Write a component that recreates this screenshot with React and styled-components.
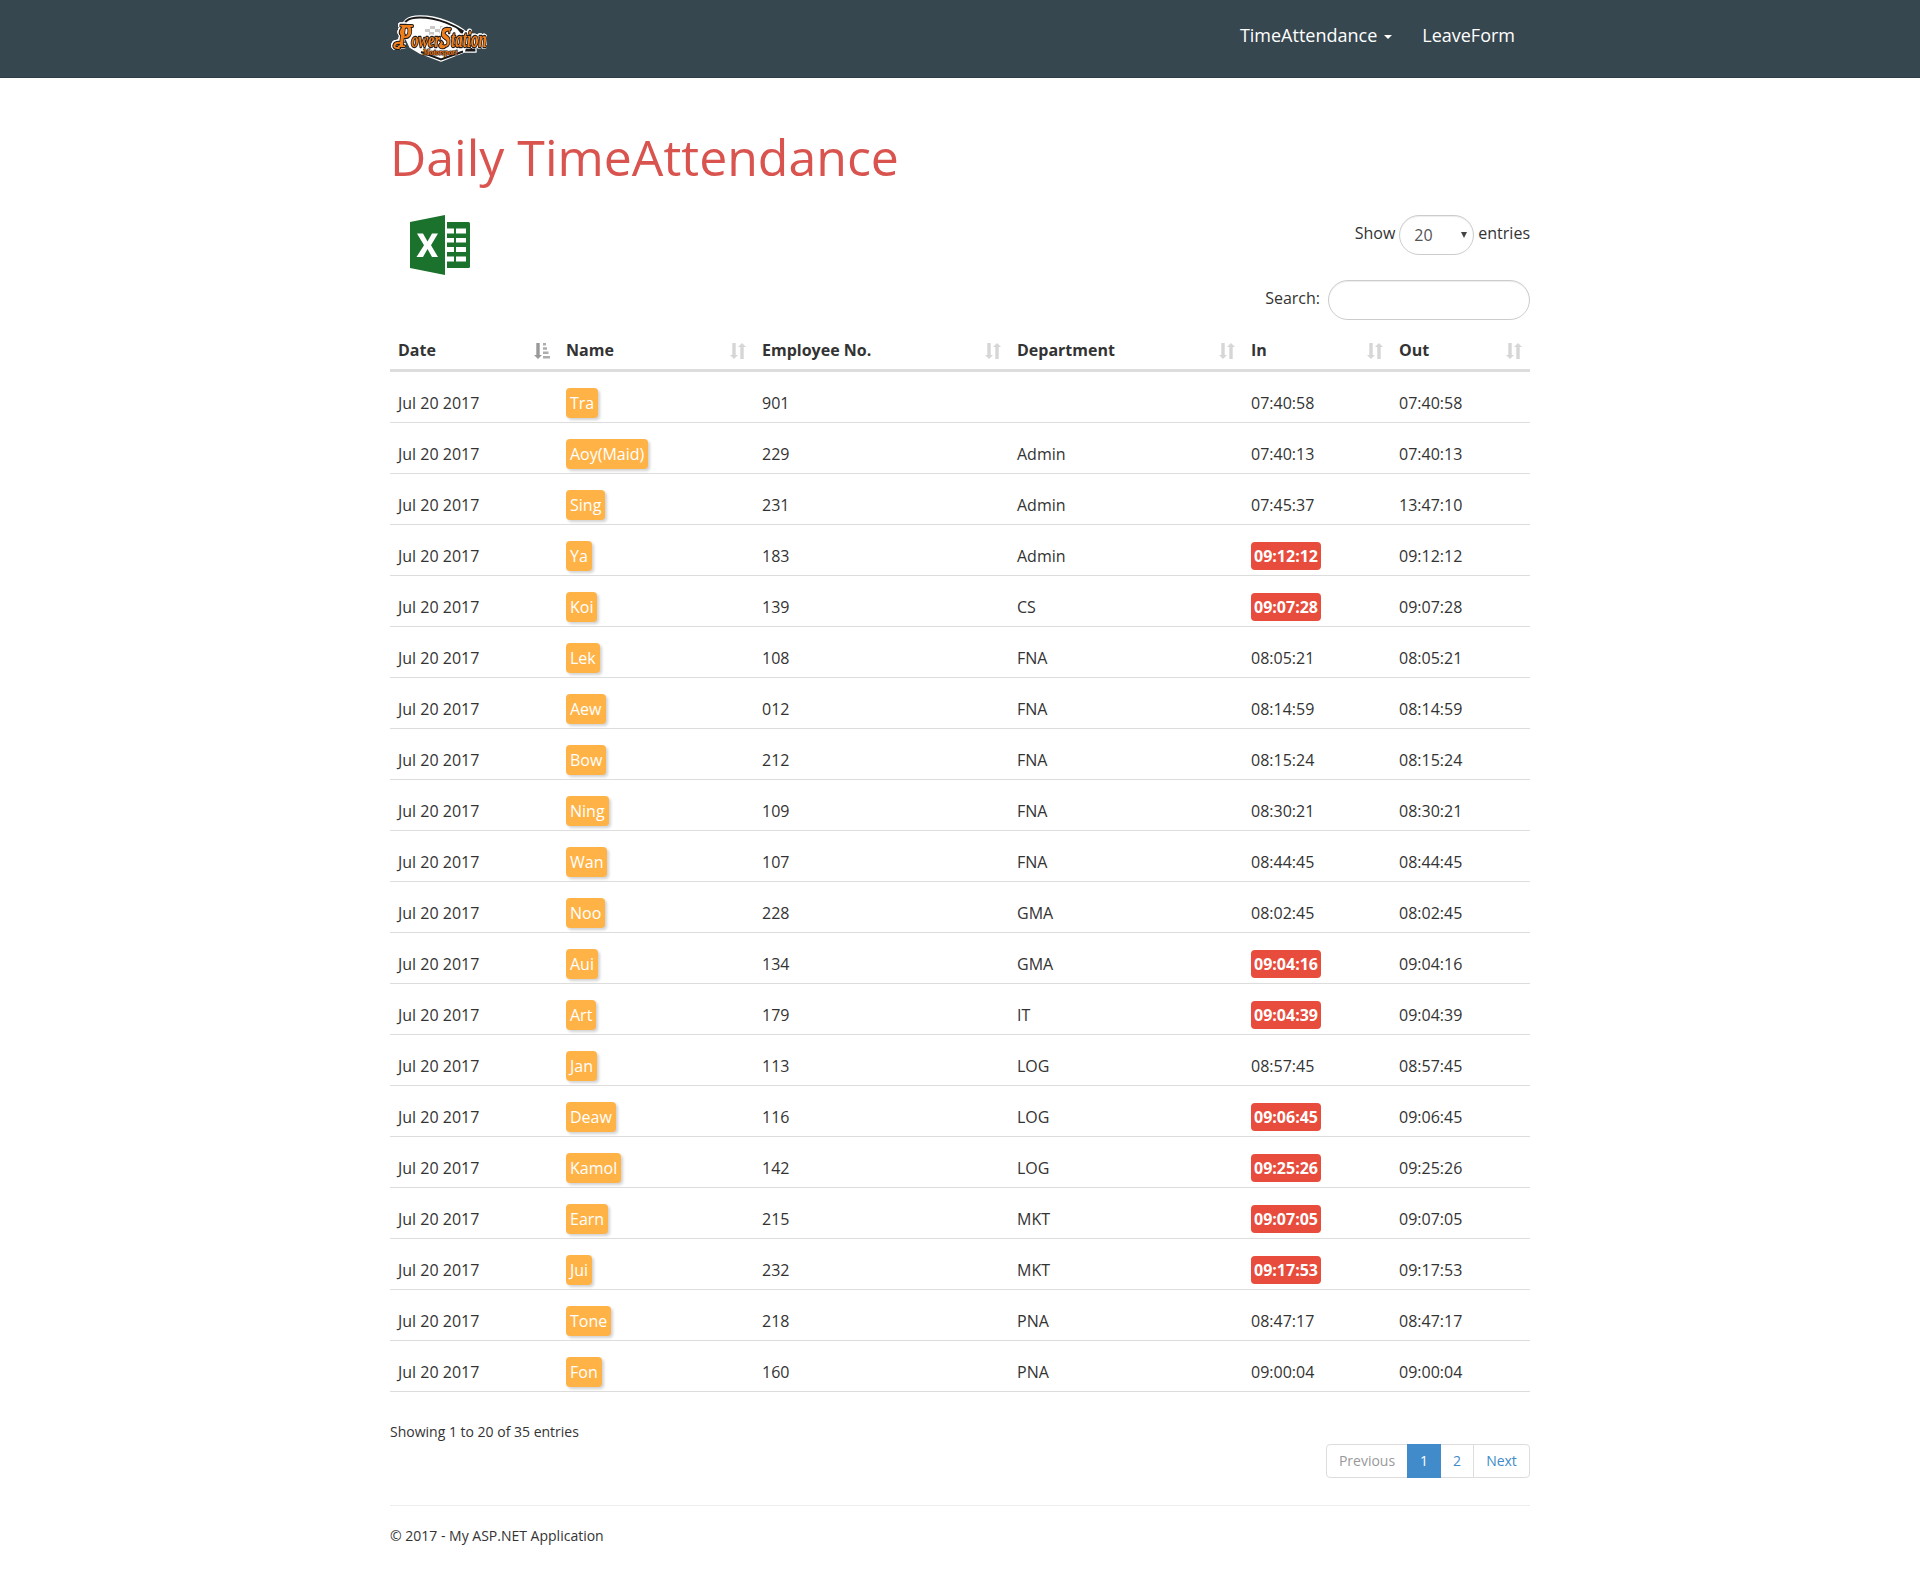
import React from "react";
import styled, { createGlobalStyle, css } from "styled-components";

const GlobalStyle = createGlobalStyle`
  *, *::before, *::after { box-sizing: border-box; }
  body {
    margin: 0;
    background: #fff;
    color: #333;
    font: 14px/20px "Open Sans", "Noto Sans", sans-serif;
  }
`;

const NavBar = styled.nav`
  height: 78px;
  background: #37474f;
  border-bottom: 1px solid #2c3e46;
`;

const Container = styled.div`
  width: 1140px;
  margin: 0 auto;
`;

const NavInner = styled(Container)`
  display: flex;
  justify-content: space-between;
  align-items: flex-start;
`;

const Brand = styled.a`
  display: block;
  height: 77px;
  svg { display: block; overflow: visible; }
`;

const Menu = styled.ul`
  display: flex;
  list-style: none;
  margin: 0;
  padding: 0;
`;

const MenuItem = styled.li`
  display: flex;
  align-items: center;
  gap: 7px;
  padding: 22px 15px;
  line-height: 26px;
  font-size: 18px;
  color: #fff;
`;

const Caret = styled.span`
  margin-top: 4px;
  border-top: 4px solid #fff;
  border-left: 4px solid transparent;
  border-right: 4px solid transparent;
`;

const Title = styled.h1`
  margin: 0;
  padding-top: 43px;
  font-size: 50px;
  font-weight: 400;
  line-height: 72px;
  color: #d9534f;
`;

const Toolbar = styled.div`
  display: flex;
  justify-content: space-between;
  align-items: flex-start;
  padding: 22px 0 0 20px;
  height: 134px;
`;

const Controls = styled.div`
  display: flex;
  flex-direction: column;
  align-items: flex-end;
  gap: 25px;
  font-size: 16px;
`;

const Field = styled.label`
  display: flex;
  align-items: center;
  gap: ${(p) => p.$gap}px;
  height: 40px;
`;

const FieldText = styled.span`
  line-height: 36px;
  padding-bottom: 4px;
`;

const pill = css`
  height: 40px;
  border: 1px solid #ccc;
  border-radius: 20px;
  box-shadow: inset 0 1px 1px rgba(0, 0, 0, 0.075);
  background: #fff;
`;

const LengthSelect = styled.span`
  ${pill}
  width: 75px;
  display: flex;
  align-items: center;
  justify-content: space-between;
  padding: 0 6px 0 14px;
  color: #555;
`;

const SelectArrow = styled.span`
  border-top: 6px solid #444;
  border-left: 3px solid transparent;
  border-right: 3px solid transparent;
`;

const SearchInput = styled.input`
  ${pill}
  width: 202px;
  padding: 6px 12px;
  outline: none;
`;

const Table = styled.table`
  width: 1140px;
  table-layout: fixed;
  border-collapse: separate;
  border-spacing: 0;
  font-size: 16px;
`;

const Th = styled.th`
  width: ${(p) => p.$width}px;
  height: 45px;
  padding: 4px 8px 0;
  border-bottom: 3px solid #ddd;
  text-align: left;
  font-weight: 700;
`;

const ThInner = styled.div`
  display: flex;
  justify-content: space-between;
  align-items: center;
  height: 38px;
  line-height: 38px;
  svg { margin-top: 2px; }
`;

const Td = styled.td`
  height: 51px;
  padding: 16px 8px 4px;
  border-bottom: 1px solid #ddd;
  line-height: 30px;
  vertical-align: top;
`;

const NameChip = styled.span`
  display: block;
  width: fit-content;
  height: 30px;
  padding: 0 4px;
  border-radius: 4px;
  background: #ffb347;
  color: #fff;
  box-shadow: 2px 2px 3px rgba(0, 0, 0, 0.18);
`;

const LateChip = styled.span`
  display: block;
  width: 70px;
  height: 28px;
  margin-top: 1px;
  border-radius: 4px;
  background: #e74c3c;
  color: #fff;
  font-weight: 700;
  line-height: 28px;
  text-align: center;
`;

const Info = styled.div`
  padding-top: 30px;
  line-height: 20px;
`;

const Pager = styled.div`
  display: flex;
  justify-content: flex-end;
  margin-top: 2px;
`;

const Page = styled.a`
  height: 34px;
  width: ${(p) => p.$width}px;
  margin-left: -1px;
  border: 1px solid ${(p) => (p.$active ? "#428bca" : "#ddd")};
  background: ${(p) => (p.$active ? "#428bca" : "#fff")};
  color: ${(p) => (p.$active ? "#fff" : p.$disabled ? "#999" : "#428bca")};
  line-height: 32px;
  text-align: center;
  z-index: ${(p) => (p.$active ? 1 : 0)};
  &:first-child { border-radius: 4px 0 0 4px; }
  &:last-child { border-radius: 0 4px 4px 0; }
`;

const Footer = styled.footer`
  margin-top: 27px;
  padding-top: 20px;
  border-top: 1px solid #eee;
  height: 71px;
`;

const Lettering = styled.g`
  font-family: "Liberation Serif", serif;
  font-style: italic;
  font-weight: 700;
  fill: #f07f1c;
  stroke: #201a18;
  stroke-width: 2.4px;
  stroke-linejoin: round;
  paint-order: stroke;
  filter: drop-shadow(0.6px 0 0 #fff) drop-shadow(-0.6px 0 0 #fff)
    drop-shadow(0 0.6px 0 #fff) drop-shadow(0 -0.6px 0 #fff);
`;

const Swash = styled.path`
  fill: none;
  stroke: ${(p) => (p.$outline ? "#201a18" : "#f07f1c")};
  stroke-width: ${(p) => (p.$outline ? 4 : 2)}px;
  stroke-linecap: round;
`;

const swashes = "M22 26 C10 25 8 36 14 35 M11 43 C3 42 2 49 9 48 M60 29 C53 30 50 36 56 38 M52 43 C48 46 51 48 54 47";

const Logo = () => (
  <svg width="102" height="70" viewBox="0 0 102 70">
    <path d="M13 32 C11 21 17 16 30 16 C50 16 68 25 76 32 L85 35 L86 52 L74 52 L51 61 L30 53 L20 47 Z" fill="#fff" stroke="#fff" strokeWidth="1.500" strokeLinejoin="round" />
    <path d="M14 32 C12 22 17 17.500 30 17.500 C48 17.500 66 26 76 33 M31 52 L51 59.500 L73 51.500" fill="none" stroke="#181818" strokeWidth="2" />
    <path d="M66 27.500 L76 33 L84 35 L85.500 51.500 L75 51.500 L78 42 Z" fill="#181818" />
    <path d="M40 26h5v3h-5zM50 26h5v3h-5zM35 29h5v3h-5zM45 29h5v3h-5zM39 32h5v3h-5zM49 32h4v3h-4z" fill="#c9c9c9" />
    <Lettering>
      <Swash $outline d={swashes} />
      <text x="8" y="47" textLength="89" lengthAdjust="spacingAndGlyphs">
        <tspan fontSize="33">P</tspan>
        <tspan fontSize="22">ower</tspan>
        <tspan fontSize="30">S</tspan>
        <tspan fontSize="23">tation</tspan>
      </text>
      <Swash d={swashes} />
    </Lettering>
    <text x="33" y="55" fontFamily="Liberation Serif, serif" fontStyle="italic" fontWeight="700" fontSize="8" textLength="34" lengthAdjust="spacingAndGlyphs" fill="#f07f1c" stroke="#201a18" strokeWidth="1.200" paintOrder="stroke">Motorsport</text>
  </svg>
);

const ExcelIcon = () => (
  <svg width="60" height="60" viewBox="0 0 60 60">
    <path d="M0 7 L35 0 V60 L0 53 Z" fill="#1b722d" />
    <path d="M37 7H58.5Q60 7 60 8.500V51.500Q60 53 58.500 53H37Z" fill="#1b722d" />
    <path d="M37 13.500h7v5h-7zM46 13.500h10v5H46zM37 23h7v4.500h-7zM46 23h10v4.500H46zM37 32h7v5h-7zM46 32h10v5H46zM37 41.500h7v5h-7zM46 41.500h10v5H46z" fill="#fff" />
    <path d="M7 18.500h6l4.500 8 4.500-8h6l-7 11.800 7 11.700h-6l-4.500-8-4.500 8H6.500l7.500-11.700z" fill="#fff" />
  </svg>
);

const SortIcon = () => (
  <svg width="16" height="16" viewBox="0 0 16 16" fill="#d6d6d6">
    <path d="M2.300 0h3.400v12H8L4 16 0 12h2.300zM10.300 16h3.400V4H16L12 0 8 4h2.300z" />
  </svg>
);

const SortAscIcon = () => (
  <svg width="16" height="16" viewBox="0 0 16 16">
    <path d="M2.300 0h3.400v12H8L4 16 0 12h2.300z" fill="#999" />
    <path d="M9 0h3v2.500H9zM9 4.300h4v2.500H9zM9 8.600h5.500v2.500H9zM9 13h7v2.500H9z" fill="#adadad" />
  </svg>
);

const columns = [
  ["Date", 168],
  ["Name", 196],
  ["Employee No.", 255],
  ["Department", 234],
  ["In", 148],
  ["Out", 139],
];

const rows = [
  ["Tra", "901", "", "07:40:58", "07:40:58"],
  ["Aoy(Maid)", "229", "Admin", "07:40:13", "07:40:13"],
  ["Sing", "231", "Admin", "07:45:37", "13:47:10"],
  ["Ya", "183", "Admin", "09:12:12", "09:12:12", true],
  ["Koi", "139", "CS", "09:07:28", "09:07:28", true],
  ["Lek", "108", "FNA", "08:05:21", "08:05:21"],
  ["Aew", "012", "FNA", "08:14:59", "08:14:59"],
  ["Bow", "212", "FNA", "08:15:24", "08:15:24"],
  ["Ning", "109", "FNA", "08:30:21", "08:30:21"],
  ["Wan", "107", "FNA", "08:44:45", "08:44:45"],
  ["Noo", "228", "GMA", "08:02:45", "08:02:45"],
  ["Aui", "134", "GMA", "09:04:16", "09:04:16", true],
  ["Art", "179", "IT", "09:04:39", "09:04:39", true],
  ["Jan", "113", "LOG", "08:57:45", "08:57:45"],
  ["Deaw", "116", "LOG", "09:06:45", "09:06:45", true],
  ["Kamol", "142", "LOG", "09:25:26", "09:25:26", true],
  ["Earn", "215", "MKT", "09:07:05", "09:07:05", true],
  ["Jui", "232", "MKT", "09:17:53", "09:17:53", true],
  ["Tone", "218", "PNA", "08:47:17", "08:47:17"],
  ["Fon", "160", "PNA", "09:00:04", "09:00:04"],
];

export default function App() {
  return (
    <>
      <GlobalStyle />
      <NavBar>
        <NavInner>
          <Brand><Logo /></Brand>
          <Menu>
            <MenuItem>TimeAttendance <Caret /></MenuItem>
            <MenuItem>LeaveForm</MenuItem>
          </Menu>
        </NavInner>
      </NavBar>
      <Container>
        <Title>Daily TimeAttendance</Title>
        <Toolbar>
          <ExcelIcon />
          <Controls>
            <Field $gap={4}>
              <FieldText>Show</FieldText>
              <LengthSelect>20<SelectArrow /></LengthSelect>
              <FieldText>entries</FieldText>
            </Field>
            <Field $gap={8}>
              <FieldText>Search:</FieldText>
              <SearchInput type="search" />
            </Field>
          </Controls>
        </Toolbar>
        <Table>
          <thead>
            <tr>
              {columns.map(([label, width], i) => (
                <Th key={label} $width={width}>
                  <ThInner>{label}{i === 0 ? <SortAscIcon /> : <SortIcon />}</ThInner>
                </Th>
              ))}
            </tr>
          </thead>
          <tbody>
            {rows.map(([name, no, dept, tin, tout, late]) => (
              <tr key={no}>
                <Td>Jul 20 2017</Td>
                <Td><NameChip>{name}</NameChip></Td>
                <Td>{no}</Td>
                <Td>{dept}</Td>
                <Td>{late ? <LateChip>{tin}</LateChip> : tin}</Td>
                <Td>{tout}</Td>
              </tr>
            ))}
          </tbody>
        </Table>
        <Info>Showing 1 to 20 of 35 entries</Info>
        <Pager>
          <Page $width={82} $disabled>Previous</Page>
          <Page $width={34} $active>1</Page>
          <Page $width={34}>2</Page>
          <Page $width={57}>Next</Page>
        </Pager>
        <Footer>© 2017 - My ASP.NET Application</Footer>
      </Container>
    </>
  );
}
